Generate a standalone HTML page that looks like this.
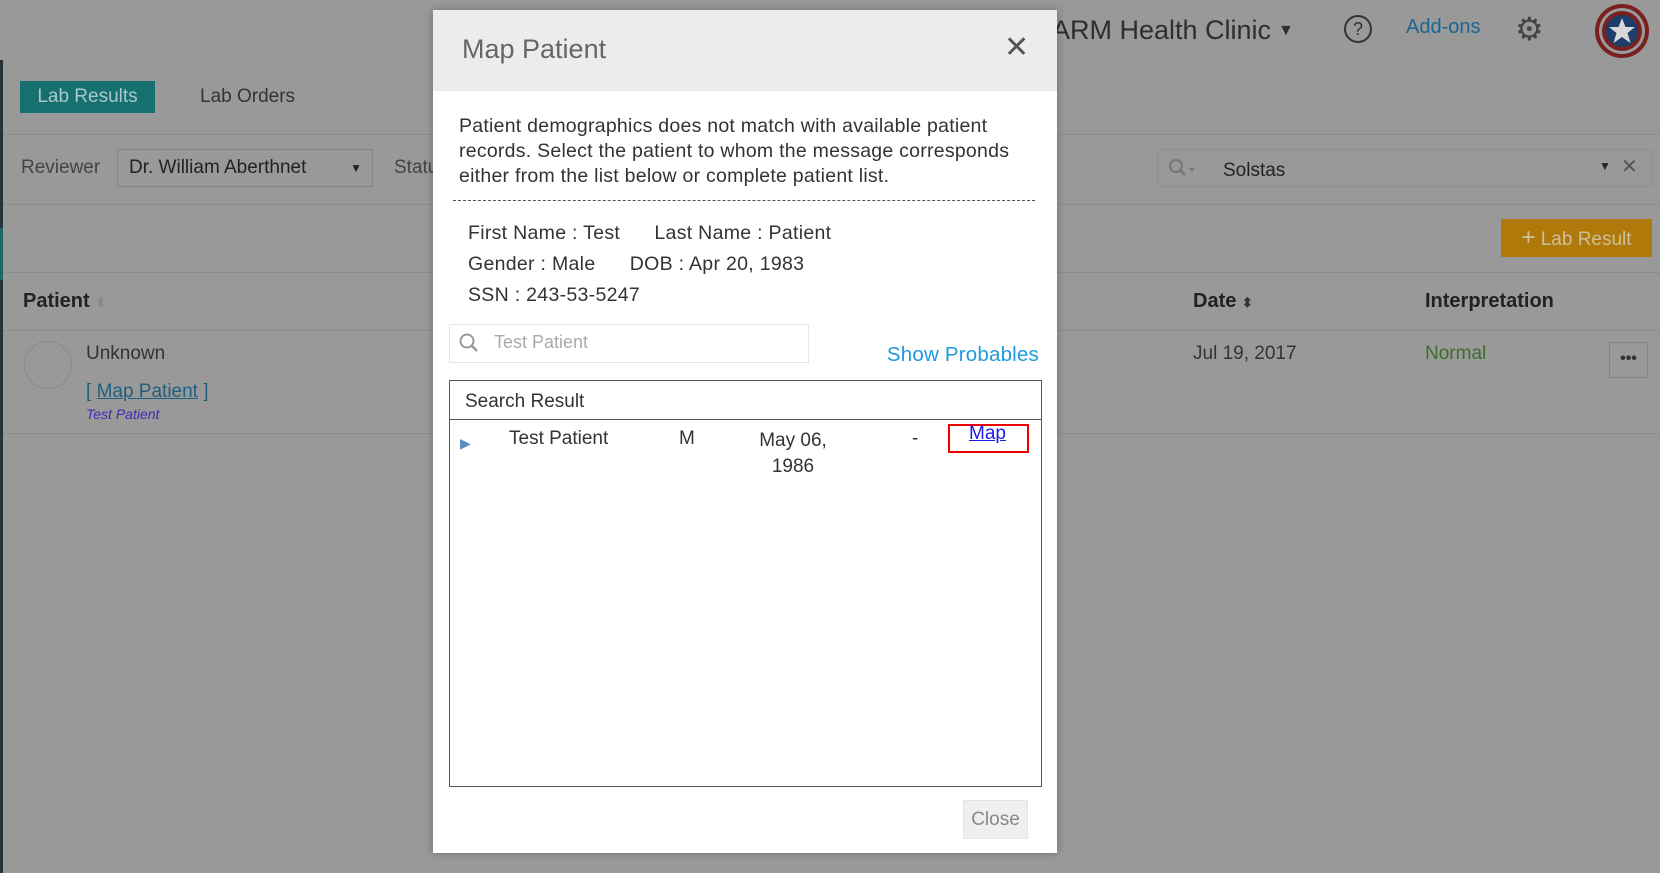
<!DOCTYPE html>
<html><head><meta charset="utf-8"><style>
*{margin:0;padding:0;box-sizing:border-box}
body{width:1660px;height:873px;background:#999;font-family:"Liberation Sans",sans-serif;position:relative;overflow:hidden;color:#2e2e2e}
.a{position:absolute;white-space:nowrap}
.hl{position:absolute;height:1px;background:#8d8d8d}
</style></head><body>
<div class="a" style="left:0;top:60px;width:3px;height:813px;background:#26343a"></div>
<div class="a" style="left:0;top:228px;width:3px;height:52px;background:#1a6a6a"></div>
<div class="a" style="left:20px;top:81px;width:135px;height:32px;background:#167070;color:#a9c9c9;font-size:19px;line-height:32px;text-align:center">Lab Results</div>
<div class="a" style="left:200px;top:85px;font-size:19px;line-height:24px;color:#333">Lab Orders</div>
<div class="hl" style="left:3px;top:134px;width:1657px"></div>
<div class="a" style="left:21px;top:157px;font-size:19px;color:#444">Reviewer</div>
<div class="a" style="left:117px;top:149px;width:256px;height:38px;border:1px solid #858585;font-size:19px;line-height:36px;padding-left:11px;color:#222">Dr. William Aberthnet<span style="position:absolute;right:10px;font-size:12px">▼</span></div>
<div class="a" style="left:394px;top:157px;font-size:19px;color:#444">Statu</div>
<div class="hl" style="left:3px;top:204px;width:1657px"></div>
<div class="hl" style="left:3px;top:272px;width:1657px"></div>
<div class="a" style="left:23px;top:290px;font-size:20px;font-weight:bold;color:#222">Patient <span style="color:#888;font-size:13px">⬍</span></div>
<div class="hl" style="left:3px;top:330px;width:1657px"></div>
<div class="a" style="left:24px;top:341px;width:48px;height:48px;border-radius:50%;border:1px solid #8a8a8a"></div>
<div class="a" style="left:86px;top:343px;font-size:19px;color:#333">Unknown</div>
<div class="a" style="left:86px;top:381px;font-size:19px;color:#1f5f80">[ <u>Map Patient</u> ]</div>
<div class="a" style="left:86px;top:406px;font-size:14px;font-style:italic;color:#3a2fb0">Test Patient</div>
<div class="hl" style="left:3px;top:433px;width:1657px"></div>

<div class="a" style="left:1052px;top:15px;font-size:27px;color:#2e2e2e">ARM Health Clinic</div>
<div class="a" style="left:1278px;top:22px;font-size:16px;color:#2e2e2e">▼</div>
<div class="a" style="left:1344px;top:15px;width:28px;height:28px;border-radius:50%;border:2px solid #333;font-size:18px;text-align:center;line-height:24px;color:#333">?</div>
<div class="a" style="left:1406px;top:16px;font-size:20px;color:#1a6591">Add-ons</div>
<div class="a" style="left:1515px;top:11px;font-size:32px;color:#444;line-height:36px">⚙</div>
<svg class="a" style="left:1594px;top:3px" width="56" height="56" viewBox="0 0 56 56"><circle cx="28" cy="28" r="27" fill="#7a1f20"/><circle cx="28" cy="28" r="23" fill="#999"/><circle cx="28" cy="28" r="20" fill="#7a1f20"/><circle cx="28" cy="28" r="16" fill="#1d3e68"/><polygon points="28,15 31.5,24 41,24 33.5,30 36.5,40 28,34 19.5,40 22.5,30 15,24 24.5,24" fill="#d8d8d8"/></svg>
<div class="a" style="left:1157px;top:149px;width:495px;height:38px;border:1px solid #8e8e8e"></div>
<svg class="a" style="left:1168px;top:158px" width="34" height="20" viewBox="0 0 34 20"><circle cx="8" cy="8" r="6" fill="none" stroke="#777" stroke-width="2"/><line x1="12.5" y1="12.5" x2="17" y2="17" stroke="#777" stroke-width="2.5"/><polygon points="21,10 27,10 24,14" fill="#777"/></svg>
<div class="a" style="left:1223px;top:160px;font-size:19px;color:#222">Solstas</div>
<div class="a" style="left:1599px;top:159px;font-size:12px;color:#222">▼</div>
<div class="a" style="left:1621px;top:154px;font-size:20px;color:#555">✕</div>
<div class="a" style="left:1501px;top:219px;width:151px;height:38px;background:#b07a0a;color:#cdbf9e;font-size:19px;line-height:38px;text-align:center"><span style="font-size:24px">+</span> Lab Result</div>
<div class="a" style="left:1193px;top:290px;font-size:20px;font-weight:bold;color:#222">Date <span style="color:#333;font-size:13px">⬍</span></div>
<div class="a" style="left:1425px;top:290px;font-size:20px;font-weight:bold;color:#222">Interpretation</div>
<div class="a" style="left:1193px;top:343px;font-size:19px;color:#333">Jul 19, 2017</div>
<div class="a" style="left:1425px;top:343px;font-size:19px;color:#3d6e2a">Normal</div>
<div class="a" style="left:1609px;top:342px;width:39px;height:36px;border:1px solid #858585;text-align:center;font-size:16px;line-height:32px;font-weight:bold;color:#333">•••</div>

<div class="a" style="left:433px;top:10px;width:624px;height:843px;background:#fff;box-shadow:0 0 8px rgba(0,0,0,.3)">
 <div style="position:absolute;left:0;top:0;width:624px;height:81px;background:#ececec"></div>
 <div class="a" style="left:29px;top:24px;font-size:27px;color:#666">Map Patient</div>
 <div class="a" style="left:571px;top:20px;font-size:30px;color:#555">✕</div>
 <div class="a" style="left:26px;top:104px;font-size:19.5px;letter-spacing:.25px;line-height:25px;color:#333">Patient demographics does not match with available patient<br>records. Select the patient to whom the message corresponds<br>either from the list below or complete patient list.</div>
 <div class="a" style="left:20px;top:190px;width:582px;border-top:1px dashed #555"></div>
 <div class="a" style="left:35px;top:208px;font-size:19.5px;letter-spacing:.3px;line-height:31px;color:#333">First Name : Test&nbsp;&nbsp;&nbsp;&nbsp;&nbsp;&nbsp;Last Name : Patient<br>Gender : Male&nbsp;&nbsp;&nbsp;&nbsp;&nbsp;&nbsp;DOB : Apr 20, 1983<br>SSN : 243-53-5247</div>
 <div class="a" style="left:16px;top:314px;width:360px;height:39px;border:1px solid #e6e6e6"></div>
 <svg class="a" style="left:26px;top:323px" width="20" height="20" viewBox="0 0 20 20"><circle cx="8" cy="8" r="6.5" fill="none" stroke="#999" stroke-width="2"/><line x1="13" y1="13" x2="18" y2="18" stroke="#999" stroke-width="2.5"/></svg>
 <div class="a" style="left:61px;top:322px;font-size:18px;color:#aaa">Test Patient</div>
 <div class="a" style="right:18px;top:333px;font-size:20.5px;letter-spacing:.2px;color:#1d9ade">Show Probables</div>
 <div class="a" style="left:16px;top:370px;width:593px;height:407px;border:1px solid #555"></div>
 <div class="a" style="left:16px;top:409px;width:593px;border-top:1px solid #555"></div>
 <div class="a" style="left:32px;top:381px;font-size:19px;color:#333">Search Result</div>
 <div class="a" style="left:27px;top:425px;font-size:14px;color:#5a8fc0">▶</div>
 <div class="a" style="left:76px;top:418px;font-size:19px;color:#333">Test Patient</div>
 <div class="a" style="left:246px;top:418px;font-size:19px;color:#333">M</div>
 <div class="a" style="left:290px;top:418px;width:140px;text-align:center;font-size:19px;line-height:26px;color:#333">May 06,<br>1986</div>
 <div class="a" style="left:479px;top:418px;font-size:19px;color:#333">-</div>
 <div class="a" style="left:515px;top:414px;width:81px;height:29px;border:2px solid #e00"></div>
 <div class="a" style="left:536px;top:413px;font-size:19px;color:#1a1aee;text-decoration:underline">Map</div>
 <div class="a" style="left:530px;top:790px;width:65px;height:39px;background:#efefef;border:1px solid #e3e3e3;font-size:19px;line-height:37px;text-align:center;color:#888">Close</div>
</div>
</body></html>
